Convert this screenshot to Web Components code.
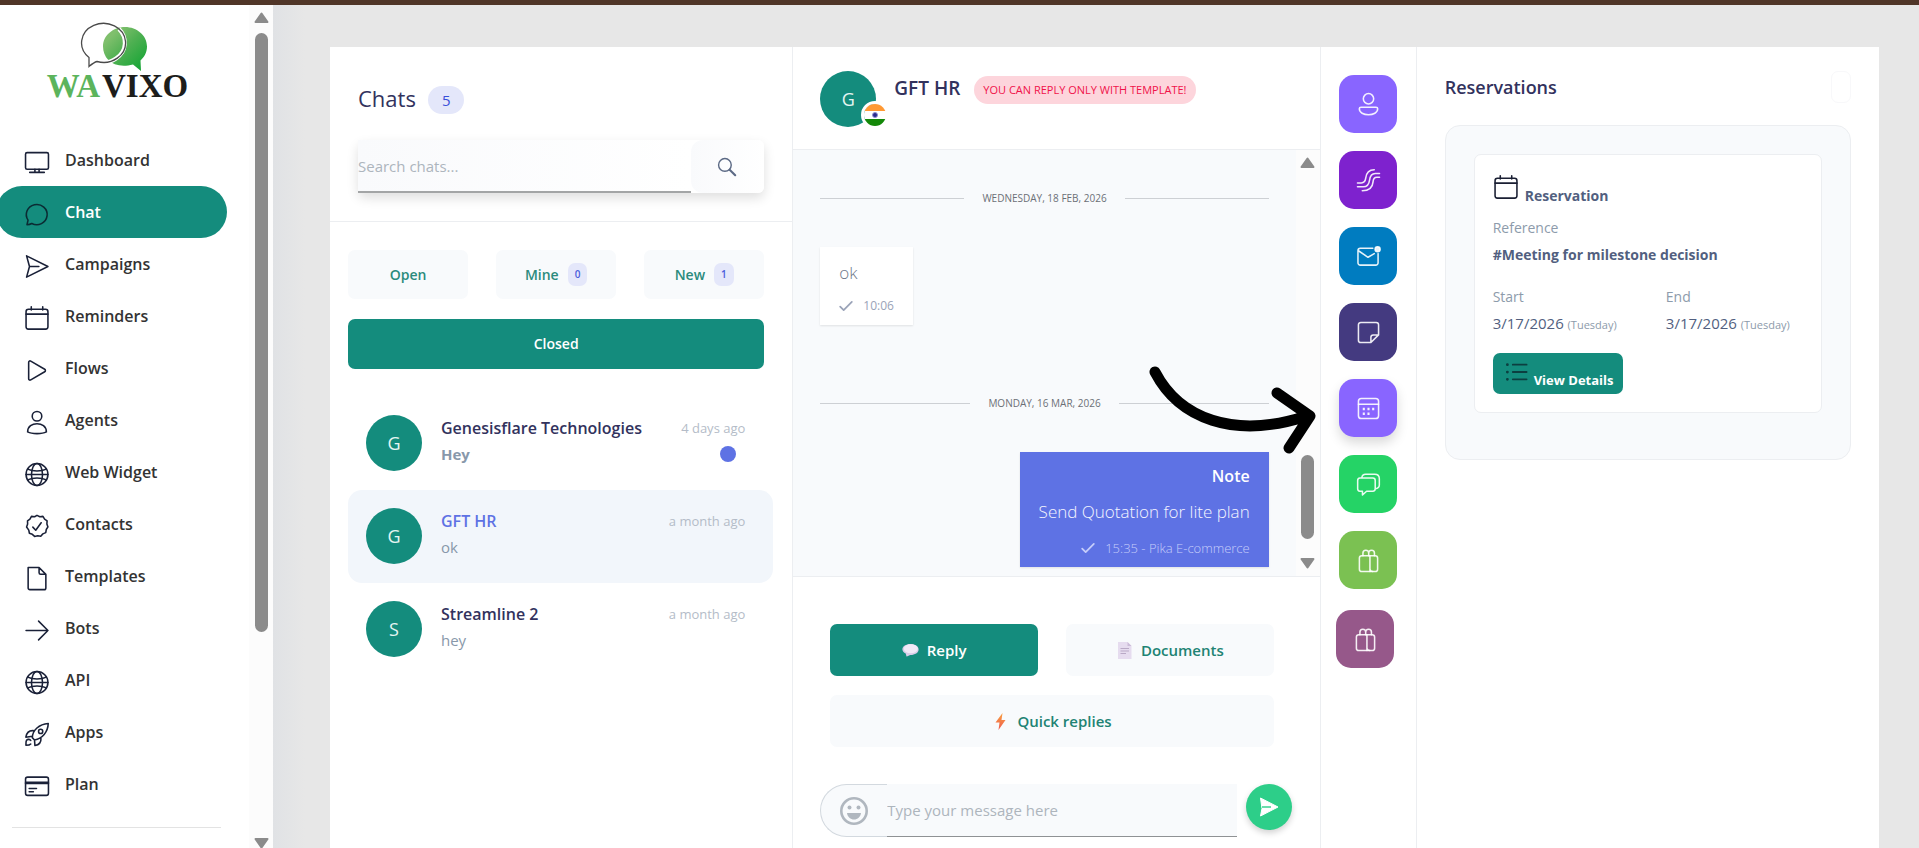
<!DOCTYPE html>
<html lang="en">
<head>
<meta charset="utf-8">
<meta name="viewport" content="width=device-width, initial-scale=1">
<title>Wavixo - Chat</title>
<style>
  body {
    margin: 0;
    min-height: 100vh;
    overflow: hidden;
    background: #e7e7e7;
    font-family: "Open Sans", "Noto Sans", sans-serif;
    color: #32325d;
    --teal: #148c7d;
    --indigo: #5e72e4;
    --soft: #f8fafc;
    --line: #eceef1;
    --muted: #8898aa;
  }
</style>
</head>
<body>
<wavixo-app></wavixo-app>

<script>
const ICONS = {
  monitor: '<rect x="1" y="2.5" width="22" height="16" rx="1.5"/><path d="M10 18.5v3M14 18.5v3M5 21.5h14"/>',
  chat: '<path d="M2.4 21.8l1-4.4A10 9.7 0 1 1 7 20.6c-1 .6-2.600 1.200-4.600 1.200z"/>',
  send: '<path d="M2 1.800l20.500 10.200L2 22.200l2.800-10.200zM4.800 12h9"/>',
  calendar: '<rect x="1.500" y="3.200" width="21" height="19" rx="2.200"/><path d="M1.500 7.800h21M6.500.800v3M17.500.800v3"/>',
  play: '<path d="M4 4.200v15.600c0 1.200 1 1.800 2 1.200l13.400-7.800c.9-.5.900-1.900 0-2.400L6 3c-1-.6-2 0-2 1.200z"/>',
  user: '<circle cx="12" cy="6" r="4.600"/><path d="M3 21c0-10.500 18-10.500 18 0-4 2.200-14 2.200-18 0z"/>',
  globe: '<circle cx="12" cy="12" r="10.500"/><ellipse cx="12" cy="12" rx="5.300" ry="10.500"/><path d="M3 6.800c5 2.400 13 2.400 18 0M3 17.200c5-2.400 13-2.400 18 0M1.500 12h21"/>',
  badge: '<path d="M12 1.300l2.700 1.300 3-.3 1.600 2.600 2.400 1.700-.2 3 1 2.800-1.600 2.500-.5 3-2.800 1.200-2 2.200-2.900-.4-3 .6-2.200-2-2.800-1-.6-3L2 12.500l1-2.800-.1-3 2.300-1.700L6.700 2.300l3 .3z"/><path d="M8 12.600l2.800 3L16 8.400"/>',
  page: '<path d="M3.500 1.500H14l6.500 6.500v13c0 1-.6 1.700-1.700 1.700H5.200c-1 0-1.700-.7-1.700-1.700zM14 1.500v5c0 1 .5 1.500 1.500 1.500h5"/>',
  arrow: '<path d="M1.500 12h21M13.500 3l9 9-9 9"/>',
  rocket: '<path d="M7.500 15c.2-7 6.500-13 15.300-13.600C22.500 9.500 17 16 9.600 17.200zM8.400 8.300C4 8 2 10.500 1.300 14.600l6.200-1M15.800 15.800c.3 3.800-1.800 6-5.800 6.800l-.4-5.400M2 17.500c1-1.300 3.400-1 4 .300M2 17.500c-.8 1.500-.6 3-.6 4.800 2 0 3.600 0 4.600-1.200"/><circle cx="15.500" cy="9" r="2"/>',
  card: '<rect x="1" y="3" width="22" height="17.500" rx="2"/><path d="M1 8h22M1 9h22M4.500 14h7M4.500 17h4"/>',
  search: '<circle cx="10" cy="10" r="8"/><path d="M16 16l7 7" stroke-width="2.600"/>',
  check: '<path d="M2 13l6 6L22 5" stroke-width="3"/>',
  list: '<path d="M2 4h.1M2 12h.1M2 20h.1" stroke-width="3"/><path d="M8 4h15M8 12h15M8 20h15" stroke-width="2"/>',
  person: '<circle cx="12" cy="6" r="5.400"/><path d="M4.200 14.800h15.600c1 0 1.800.7 1.800 1.700 0 4-4.600 6.300-9.600 6.300s-9.600-2.300-9.600-6.300c0-1 .8-1.700 1.800-1.700z"/>',
  waves: '<path d="M.5 14.500h4c3.500 0 4.200-2 4.600-5C9.700 4.500 11.500.800 18 .800M.5 18.600h6c4.500 0 6-2.500 6.600-7 .5-4.200 1.500-7 6-7h4.400M5.500 22.700c6.500 0 10.700-3 11.200-9 .3-3.500 1-5 4-5h2.800"/>',
  mail: '<path d="M16.500 3.500H3.500A2.500 2.500 0 0 0 1 6v12.500A2.500 2.500 0 0 0 3.500 21h16a2.500 2.500 0 0 0 2.500-2.500V9M1.500 6l10 6.800L18 9"/><circle cx="21.500" cy="4.500" r="2.600" fill="currentColor"/>',
  note: '<path d="M1.500 4A2.500 2.500 0 0 1 4 1.500h16A2.500 2.500 0 0 1 22.500 4v10.500l-8 8H4A2.500 2.500 0 0 1 1.500 20zM14.500 22V17c0-1.500 1-2.500 2.500-2.500h5"/>',
  dates: '<rect x="1.500" y="1.500" width="21" height="21" rx="3"/><path d="M1.500 7.500h21"/><path d="M6 12.500h2.200M10.900 12.500h2.200M15.800 12.500h2.200M6 17.500h2.200M10.900 17.500h2.200" stroke-width="2.600" stroke-linecap="butt"/>',
  chats: '<path d="M3 5.200h13.500a2.500 2.500 0 0 1 2.500 2.500v8.800a2.500 2.500 0 0 1-2.500 2.500H10l-4.300 4v-4H3A2.500 2.500 0 0 1 .7 16.500V7.700A2.500 2.500 0 0 1 3 5.200zM5 5c.3-2.300 1.500-3.700 4-3.700h9.500c3 0 4.800 1.800 4.800 4.700v6.500c0 2-1.300 3.500-4.300 4"/>',
  bag: '<rect x="2.500" y="7" width="19" height="16.500" rx="2.500"/><path d="M13.500 7v16.500M6.200 7V4.200a3 3 0 0 1 6 0V7M12.200 4.200a3 3 0 0 1 6 0V7M13.500 21c.5 1.800 1.500 2.500 3 2.500"/>'
};

class WxIcon extends HTMLElement {
  connectedCallback() {
    this.attachShadow({ mode: 'open' });
    this.shadowRoot.innerHTML = `
      <style>
        :host {
          display: block;
          flex: none;
          width: var(--size, 26px);
          height: var(--size, 26px);
        }
        svg {
          display: block;
          width: 100%;
          height: 100%;
          overflow: visible;
          fill: none;
          stroke: currentColor;
          stroke-width: var(--stroke, 1.5);
          stroke-linecap: round;
          stroke-linejoin: round;
        }
      </style>
      <svg viewBox="0 0 24 24" aria-hidden="true">${ICONS[this.getAttribute('name')]}</svg>
    `;
  }
}
customElements.define('wx-icon', WxIcon);

class WxAvatar extends HTMLElement {
  connectedCallback() {
    this.attachShadow({ mode: 'open' });
    this.shadowRoot.innerHTML = `
      <style>
        :host {
          display: flex;
          flex: none;
          align-items: center;
          justify-content: center;
          width: 56px;
          height: 56px;
          border-radius: 50%;
          background: var(--teal);
          color: #e4f5f2;
          font-size: 18px;
          line-height: 24px;
        }
      </style>
      <slot></slot>
    `;
  }
}
customElements.define('wx-avatar', WxAvatar);

// Always-visible scrollbar track; before/size/after are the thumb's share of the track
class WxScrollbar extends HTMLElement {
  connectedCallback() {
    this.attachShadow({ mode: 'open' });
    this.shadowRoot.innerHTML = `
      <style>
        :host {
          display: flex;
          flex-direction: column;
          align-items: center;
          box-sizing: border-box;
          width: 24px;
          padding: 7px 0;
          gap: 10px;
          background: #fcfcfc;
        }
        svg {
          flex: none;
          width: 15px;
          height: 11px;
          fill: #8b8b8b;
          stroke: #8b8b8b;
          stroke-width: 2;
          stroke-linejoin: round;
        }
        .track {
          flex: 1;
          display: flex;
          flex-direction: column;
        }
        .before { flex: ${this.getAttribute('before')}; }
        .thumb {
          flex: ${this.getAttribute('size')};
          width: 13px;
          border-radius: 7px;
          background: #8b8b8b;
        }
        .after { flex: ${this.getAttribute('after')}; }
      </style>
      <svg viewBox="0 0 15 11"><path d="M7.500 1.500L13.500 10h-12z"/></svg>
      <div class="track"><div class="before"></div><div class="thumb"></div><div class="after"></div></div>
      <svg viewBox="0 0 15 11"><path d="M7.500 9.500L13.500 1h-12z"/></svg>
    `;
  }
}
customElements.define('wx-scrollbar', WxScrollbar);

class WxLogo extends HTMLElement {
  connectedCallback() {
    this.attachShadow({ mode: 'open' });
    this.shadowRoot.innerHTML = `
      <style>
        :host {
          display: flex;
          flex-direction: column;
          align-items: center;
        }
        svg { display: block; }
        .name {
          display: flex;
          gap: 2px;
          font: bold 33px/30px "Liberation Serif", serif;
          color: #1d1d1b;
        }
        .wa { color: #5cb45c; }
      </style>
      <svg width="78" height="50" viewBox="0 0 78 50" aria-hidden="true">
        <defs>
          <linearGradient id="leaf" x1="0" y1="0" x2="1" y2="1">
            <stop offset="0.200" stop-color="#7fbf6c"/>
            <stop offset="0.500" stop-color="#4fb052"/>
            <stop offset="1" stop-color="#0aa32f"/>
          </linearGradient>
        </defs>
        <path fill="url(#leaf)" d="M46 6c12 0 22 8.500 22 19.500 0 5.500-2.500 10.500-6.500 14L62 50l-8-6.500C35 48.500 24 38 24 25.500 24 14.500 34 6 46 6z"/>
        <path fill="none" stroke="#fff" stroke-width="4" d="M40 8c8 8 8.500 22-3 29.500-5 3.500-12 5-19 3.700"/>
        <path fill="none" stroke="#4a4a4a" stroke-width="1.300" d="M10 45.500V36.500A22 19.500 0 1 1 18 40.500c-3 .8-5 2.500-8 5z"/>
      </svg>
      <div class="name"><span class="wa">WA</span><span>VIXO</span></div>
    `;
  }
}
customElements.define('wx-logo', WxLogo);

class AppSidebar extends HTMLElement {
  connectedCallback() {
    const items = [
      ['Dashboard', 'monitor'], ['Chat', 'chat'], ['Campaigns', 'send'],
      ['Reminders', 'calendar'], ['Flows', 'play'], ['Agents', 'user'],
      ['Web Widget', 'globe'], ['Contacts', 'badge'], ['Templates', 'page'],
      ['Bots', 'arrow'], ['API', 'globe'], ['Apps', 'rocket'], ['Plan', 'card']
    ];
    this.attachShadow({ mode: 'open' });
    this.shadowRoot.innerHTML = `
      <style>
        :host {
          display: flex;
          overflow: hidden;
          background: #fff;
        }
        .body {
          flex: 1;
          padding-top: 16px;
        }
        wx-logo { margin-right: 14px; }
        nav {
          margin: 33px 22px 17px -4px;
        }
        a {
          display: flex;
          align-items: center;
          gap: 15px;
          height: 52px;
          padding-left: 28px;
          border-radius: 26px;
          color: #333;
          font-size: 16px;
          font-weight: 600;
          line-height: 24px;
          text-decoration: none;
        }
        a.active {
          background: var(--teal);
          color: #fff;
        }
        wx-icon {
          --size: 25px;
          width: 26px;
          margin-top: 5px;
          color: #1a2138;
        }
        a.active wx-icon { color: #0b2b33; }
        hr {
          margin: 0 28px 0 12px;
          border: 0;
          border-top: 1px solid #e3e3e3;
        }
        wx-scrollbar { margin-bottom: -8px; }
      </style>
      <div class="body">
        <wx-logo></wx-logo>
        <nav>${items.map(([label, icon]) => `
          <a href="#"${label === 'Chat' ? ' class="active"' : ''}><wx-icon name="${icon}"></wx-icon>${label}</a>`).join('')}
        </nav>
        <hr>
      </div>
      <wx-scrollbar before="0" size="600" after="196"></wx-scrollbar>
    `;
  }
}
customElements.define('app-sidebar', AppSidebar);

class ChatItem extends HTMLElement {
  connectedCallback() {
    this.attachShadow({ mode: 'open' });
    this.shadowRoot.innerHTML = `
      <style>
        :host {
          display: flex;
          gap: 19px;
          padding: 18px 28px 19px 18px;
          border-radius: 14px;
        }
        :host([selected]) { background: #f2f6fb; }
        .text { flex: 1; }
        .row {
          display: flex;
          align-items: center;
          justify-content: space-between;
          height: 26px;
        }
        .name {
          font-size: 16px;
          font-weight: 600;
          color: #32325d;
        }
        :host([selected]) .name { color: var(--indigo); }
        .time {
          font-size: 13px;
          color: #b4bcc8;
        }
        .preview {
          font-size: 15px;
          color: var(--muted);
        }
        :host([unread]) .preview { font-weight: 700; }
        .dot {
          width: 16px;
          height: 16px;
          margin-right: 9px;
          border-radius: 50%;
          background: var(--indigo);
        }
      </style>
      <wx-avatar>${this.getAttribute('name')[0]}</wx-avatar>
      <div class="text">
        <div class="row"><span class="name">${this.getAttribute('name')}</span><span class="time">${this.getAttribute('time')}</span></div>
        <div class="row"><span class="preview"><slot></slot></span>${this.hasAttribute('unread') ? '<span class="dot"></span>' : ''}</div>
      </div>
    `;
  }
}
customElements.define('chat-item', ChatItem);

class ChatList extends HTMLElement {
  connectedCallback() {
    this.attachShadow({ mode: 'open' });
    this.shadowRoot.innerHTML = `
      <style>
        :host {
          display: block;
          min-width: 0;
        }
        header {
          padding: 33px 28px 28px;
          border-bottom: 1px solid var(--line);
        }
        .title {
          display: flex;
          align-items: center;
          gap: 12px;
          height: 36px;
          margin-bottom: 24px;
        }
        h1 {
          margin: 0;
          font-size: 22px;
          font-weight: 500;
          line-height: 30px;
        }
        .count {
          margin-top: 4px;
          padding: 0 14px;
          border-radius: 14px;
          background: #e4e7fa;
          color: #3a50d9;
          font-size: 15px;
          line-height: 28px;
        }
        .search {
          display: flex;
          height: 53px;
          border-radius: 6px;
          box-shadow: 0 5px 12px rgba(0, 0, 0, 0.130);
        }
        input {
          flex: 1;
          min-width: 0;
          padding: 0;
          border: 0;
          border-bottom: 2px solid #a3a5a6;
          background: linear-gradient(90deg, #f9fafc, #fff);
          font: 15px "Open Sans", sans-serif;
        }
        input::placeholder { color: #adb5bd; }
        .search button {
          display: flex;
          align-items: center;
          justify-content: center;
          width: 73px;
          padding: 0 3px 0 0;
          border: 0;
          border-radius: 12px 6px 6px 12px;
          background: linear-gradient(90deg, #f9fafc, #fff);
          color: #5c6a85;
          --size: 19px;
          --stroke: 1.800;
        }
        .tabs {
          display: grid;
          grid-template-columns: repeat(3, 1fr);
          gap: 20px 28px;
          padding: 28px 28px 28px 18px;
        }
        .tabs button {
          display: flex;
          align-items: center;
          justify-content: center;
          gap: 9px;
          height: 49px;
          padding: 0;
          border: 0;
          border-radius: 7px;
          background: var(--soft);
          color: #2b8b7d;
          font: 600 14px/20px "Open Sans", sans-serif;
        }
        .tabs .closed {
          grid-column: 1 / -1;
          height: 50px;
          background: var(--teal);
          color: #fff;
        }
        .tabs span {
          padding: 0 7px;
          border-radius: 7px;
          background: #e4e7fa;
          color: #4a5ddc;
          font-size: 10px;
          line-height: 23px;
        }
        .items { margin: 0 19px 0 18px; }
      </style>
      <header>
        <div class="title"><h1>Chats</h1><span class="count">5</span></div>
        <div class="search">
          <input type="text" placeholder="Search chats..." aria-label="Search chats">
          <button aria-label="Search"><wx-icon name="search"></wx-icon></button>
        </div>
      </header>
      <div class="tabs">
        <button>Open</button>
        <button>Mine <span>0</span></button>
        <button>New <span>1</span></button>
        <button class="closed">Closed</button>
      </div>
      <div class="items">
        <chat-item name="Genesisflare Technologies" time="4 days ago" unread>Hey</chat-item>
        <chat-item name="GFT HR" time="a month ago" selected>ok</chat-item>
        <chat-item name="Streamline 2" time="a month ago">hey</chat-item>
      </div>
    `;
  }
}
customElements.define('chat-list', ChatList);

class DateDivider extends HTMLElement {
  connectedCallback() {
    this.attachShadow({ mode: 'open' });
    this.shadowRoot.innerHTML = `
      <style>
        :host {
          display: flex;
          align-items: center;
          gap: 18px;
          height: 24px;
          margin: 36px 0 37px;
          color: #6c7077;
          font-size: 10px;
        }
        :host::before,
        :host::after {
          content: "";
          flex: 1;
          border-top: 1px solid #cdd0d4;
        }
      </style>
      <slot></slot>
    `;
  }
}
customElements.define('date-divider', DateDivider);

class MessageBubble extends HTMLElement {
  connectedCallback() {
    const heading = this.getAttribute('heading');
    this.attachShadow({ mode: 'open' });
    this.shadowRoot.innerHTML = `
      <style>
        :host {
          display: block;
          box-sizing: border-box;
          align-self: flex-start;
          margin-bottom: 30px;
          padding: 12px 19px 5px;
          background: #fff;
          box-shadow: 0 1px 2px rgba(0, 0, 0, 0.100);
          color: #6d7789;
        }
        :host([outgoing]) {
          align-self: flex-end;
          margin-bottom: 9px;
          background: var(--indigo);
          color: #f4f5ff;
          text-align: right;
        }
        .heading {
          margin-bottom: 10px;
          color: #fff;
          font-size: 16px;
          font-weight: 600;
          line-height: 24px;
        }
        .text {
          margin-bottom: 4px;
          font-size: 17px;
          font-weight: 300;
          line-height: 28px;
        }
        .meta {
          display: flex;
          align-items: center;
          justify-content: flex-end;
          gap: 10px;
          height: 29px;
          color: #9aa3b8;
          font-size: 12px;
          --size: 14px;
        }
        :host([outgoing]) .text { margin-bottom: 7px; }
        :host([outgoing]) .meta {
          color: #c6cdfa;
          font-size: 13px;
          font-weight: 300;
        }
      </style>
      ${heading ? `<div class="heading">${heading}</div>` : ''}
      <div class="text"><slot></slot></div>
      <div class="meta"><wx-icon name="check"></wx-icon>${this.getAttribute('meta')}</div>
    `;
  }
}
customElements.define('message-bubble', MessageBubble);

class MessageComposer extends HTMLElement {
  connectedCallback() {
    this.attachShadow({ mode: 'open' });
    this.shadowRoot.innerHTML = `
      <style>
        :host {
          display: block;
          padding: 47px 28px 10px 27px;
        }
        .actions {
          display: grid;
          grid-template-columns: 1fr 1fr;
          gap: 19px 28px;
          margin: 0 18px 37px 10px;
        }
        .actions button {
          display: flex;
          align-items: center;
          justify-content: center;
          gap: 8px;
          height: 52px;
          padding: 0;
          border: 0;
          border-radius: 7px;
          background: var(--soft);
          color: #218373;
          font: 600 15px/24px "Open Sans", sans-serif;
        }
        .actions .reply {
          background: var(--teal);
          color: #fff;
        }
        .actions .quick { grid-column: 1 / -1; }
        .row {
          display: flex;
          gap: 9px;
        }
        .field {
          flex: 1;
          display: flex;
          height: 53px;
        }
        .emoji {
          display: flex;
          align-items: center;
          box-sizing: border-box;
          width: 67px;
          padding: 0 0 0 18px;
          border: 1px solid #d3d9df;
          border-right: 0;
          border-radius: 27px 0 0 27px;
          background: var(--soft);
        }
        input {
          flex: 1;
          min-width: 0;
          padding: 0;
          border: 0;
          border-bottom: 1px solid #8f9294;
          background: var(--soft);
          font: 15px "Open Sans", sans-serif;
        }
        input::placeholder { color: #adb5bd; }
        .send {
          display: flex;
          align-items: center;
          justify-content: center;
          width: 46px;
          height: 46px;
          padding: 0;
          border: 0;
          border-radius: 50%;
          background: #2dce89;
          box-shadow: 0 3px 6px rgba(0, 0, 0, 0.180);
        }
      </style>
      <div class="actions">
        <button class="reply">
          <svg width="17" height="17" viewBox="0 0 17 17" aria-hidden="true"><path fill="#d9cce8" d="M4.500 14.500l-.8-3C1.600 10.500.4 9 .4 7.500.400 4.300 4 2 8.500 2s8.100 2.300 8.100 5.500S13 13 8.500 13c-1 0-3 1.600-4 1.500z"/><ellipse cx="8.800" cy="6.800" rx="7" ry="4.500" fill="#f1eaf7"/></svg>
          Reply
        </button>
        <button>
          <svg width="17" height="17" viewBox="0 0 17 17" aria-hidden="true"><path fill="#e6dcef" d="M2 0h9.500L15.500 4v13H2z"/><path fill="#cbbbd8" d="M11.500 0l4 4h-4z"/><path stroke="#b9a9c6" d="M4.500 6.500h8.500M4.500 9h8.500M4.500 11.500h5.500"/></svg>
          Documents
        </button>
        <button class="quick">
          <svg width="17" height="17" viewBox="0 0 17 17" aria-hidden="true"><defs><linearGradient id="bolt" x2="0" y2="1"><stop stop-color="#f9a03f"/><stop offset="1" stop-color="#ee5a50"/></linearGradient></defs><path fill="url(#bolt)" d="M10.500 0L3.500 9.500h4L6.500 17l7-10h-4z"/></svg>
          Quick replies
        </button>
      </div>
      <div class="row">
        <div class="field">
          <button class="emoji" aria-label="Insert emoji">
            <svg width="30" height="30" viewBox="0 0 30 30" fill="#b0b7bf" aria-hidden="true"><circle cx="15" cy="15" r="12.700" fill="none" stroke="#b0b7bf" stroke-width="2.600"/><circle cx="10.500" cy="11.500" r="2"/><circle cx="19.500" cy="11.500" r="2"/><path d="M8 17h14c-.5 4-3.500 6.500-7 6.500S8.500 21 8 17z"/></svg>
          </button>
          <input type="text" placeholder="Type your message here" aria-label="Message">
        </div>
        <button class="send" aria-label="Send">
          <svg width="20" height="20" viewBox="0 0 20 20" aria-hidden="true"><path fill="#fff" stroke="#fff" stroke-linejoin="round" d="M1.500 1l17.500 9-17.500 9 1.500-7.500z"/><path stroke="#2dce89" stroke-width="1.400" d="M3 10h9"/></svg>
        </button>
      </div>
    `;
  }
}
customElements.define('message-composer', MessageComposer);

class ConversationView extends HTMLElement {
  connectedCallback() {
    this.attachShadow({ mode: 'open' });
    this.shadowRoot.innerHTML = `
      <style>
        :host {
          display: block;
          min-width: 0;
          border: solid var(--line);
          border-width: 0 1px;
        }
        header {
          display: flex;
          gap: 18px;
          padding: 24px 27px 22px;
          border-bottom: 1px solid var(--line);
        }
        .who {
          position: relative;
        }
        .flag {
          position: absolute;
          right: -13px;
          bottom: -2px;
          border: 3px solid #fff;
          border-radius: 50%;
        }
        .flag svg { display: block; }
        h2 {
          margin: 0;
          font-size: 19px;
          font-weight: 600;
          line-height: 34px;
        }
        .notice {
          align-self: flex-start;
          margin: 5px 0 0 -4px;
          padding: 0 9px;
          border-radius: 14px;
          background: #fdd5dc;
          color: #f0134a;
          font-size: 11px;
          line-height: 28px;
        }
        .messages {
          display: flex;
          background: var(--soft);
          border-bottom: 1px solid var(--line);
        }
        .thread {
          flex: 1;
          display: flex;
          flex-direction: column;
          padding: 0 27px;
        }
      </style>
      <header>
        <div class="who">
          <wx-avatar>G</wx-avatar>
          <span class="flag"><svg width="22" height="22" viewBox="0 0 22 22" role="img" aria-label="India"><clipPath id="round"><circle cx="11" cy="11" r="11"/></clipPath><g clip-path="url(#round)"><path fill="#fff" d="M0 0h22v22H0z"/><path fill="#ff9933" d="M0 0h22v7H0z"/><path fill="#138808" d="M0 15h22v7H0z"/></g><circle cx="11" cy="11" r="2.500" fill="#2a2a8c" stroke="#8f8fd0"/></svg></span>
        </div>
        <h2>GFT HR</h2>
        <span class="notice">YOU CAN REPLY ONLY WITH TEMPLATE!</span>
      </header>
      <div class="messages">
        <div class="thread">
          <date-divider>WEDNESDAY, 18 FEB, 2026</date-divider>
          <message-bubble meta="10:06">ok</message-bubble>
          <date-divider>MONDAY, 16 MAR, 2026</date-divider>
          <message-bubble outgoing heading="Note" meta="15:35 - Pika E-commerce">Send Quotation for lite plan</message-bubble>
        </div>
        <wx-scrollbar before="278" size="84" after="9"></wx-scrollbar>
      </div>
      <message-composer></message-composer>
    `;
  }
}
customElements.define('conversation-view', ConversationView);

class ToolRail extends HTMLElement {
  connectedCallback() {
    const tools = [
      ['Contact', 'person', '#8965ff'], ['Journeys', 'waves', '#7e22ce'],
      ['Email', 'mail', '#007cc0'], ['Notes', 'note', '#443a80'],
      ['Reservations', 'dates', '#8965ff', 'current'], ['Chats', 'chats', '#25d366'],
      ['Shopify', 'bag', '#7bc152'], ['WooCommerce', 'bag', '#96588a']
    ];
    this.attachShadow({ mode: 'open' });
    this.shadowRoot.innerHTML = `
      <style>
        :host {
          display: flex;
          flex-direction: column;
          align-items: center;
          gap: 18px;
          padding-top: 28px;
          border-right: 1px solid var(--line);
        }
        button {
          display: flex;
          align-items: center;
          justify-content: center;
          width: 58px;
          height: 58px;
          padding: 0;
          border: 0;
          border-radius: 15px;
          color: rgba(255, 255, 255, 0.900);
          --size: 23px;
          --stroke: 1.600;
        }
        button.current { box-shadow: 0 6px 12px rgba(0, 0, 0, 0.150); }
        button:last-child { margin: 3px 6px 0 0; }
      </style>
      ${tools.map(([label, icon, color, cls = '']) => `
        <button class="${cls}" style="background: ${color}" aria-label="${label}"><wx-icon name="${icon}"></wx-icon></button>`).join('')}
    `;
  }
}
customElements.define('tool-rail', ToolRail);

class ReservationPanel extends HTMLElement {
  connectedCallback() {
    this.attachShadow({ mode: 'open' });
    this.shadowRoot.innerHTML = `
      <style>
        :host {
          display: block;
          min-width: 0;
          padding: 24px 28px;
        }
        header {
          display: flex;
          align-items: center;
          justify-content: space-between;
          margin-bottom: 22px;
        }
        h2 {
          margin: 0;
          font-size: 18px;
          font-weight: 600;
          line-height: 32px;
        }
        header button {
          width: 20px;
          height: 32px;
          padding: 0;
          border: 1px solid #f8f8fa;
          border-radius: 7px;
          background: #fff;
        }
        .card {
          padding: 28px 28px 46px;
          border: 1px solid var(--line);
          border-radius: 15px;
          background: var(--soft);
        }
        .details {
          padding: 18px;
          border: 1px solid var(--line);
          border-radius: 7px;
          background: #fff;
          color: #525f7f;
        }
        .kind {
          display: flex;
          gap: 6px;
          margin-bottom: 8px;
          font-size: 14px;
          font-weight: 700;
          line-height: 22px;
        }
        .kind wx-icon {
          width: 26px;
          margin: 2px 0 0;
          color: #1a1f33;
          --size: 25px;
        }
        .kind span { padding-top: 12px; }
        .label {
          color: #8d9bab;
          font-size: 14px;
          line-height: 26px;
        }
        .reference {
          margin-bottom: 15px;
          font-size: 14px;
          font-weight: 700;
          line-height: 28px;
        }
        .dates {
          display: grid;
          grid-template-columns: 1fr 1fr;
          gap: 36px;
          margin-bottom: 15px;
          font-size: 15px;
          line-height: 27px;
        }
        small {
          color: #8d9bab;
          font-size: 11px;
        }
        .view {
          display: flex;
          gap: 6px;
          height: 41px;
          padding: 0 10px 0 12px;
          border: 0;
          border-radius: 7px;
          background: var(--teal);
          color: #fff;
          font: 700 13px/18px "Open Sans", sans-serif;
        }
        .view wx-icon {
          width: 23px;
          margin-top: 8px;
          color: #0c3f40;
          --size: 22px;
        }
        .view span { margin-top: 18px; }
      </style>
      <header><h2>Reservations</h2><button aria-label="Add reservation"></button></header>
      <div class="card">
        <div class="details">
          <div class="kind"><wx-icon name="calendar"></wx-icon><span>Reservation</span></div>
          <div class="label">Reference</div>
          <div class="reference">#Meeting for milestone decision</div>
          <div class="dates">
            <div><div class="label">Start</div>3/17/2026 <small>(Tuesday)</small></div>
            <div><div class="label">End</div>3/17/2026 <small>(Tuesday)</small></div>
          </div>
          <button class="view"><wx-icon name="list"></wx-icon><span>View Details</span></button>
        </div>
      </div>
    `;
  }
}
customElements.define('reservation-panel', ReservationPanel);

class WavixoApp extends HTMLElement {
  connectedCallback() {
    this.attachShadow({ mode: 'open' });
    this.shadowRoot.innerHTML = `
      <style>
        :host {
          display: grid;
          grid-template-columns: 273px 1fr;
          box-sizing: border-box;
          height: 100vh;
          overflow: hidden;
          border-top: 5px solid #503628;
        }
        main {
          min-width: 0;
          padding: 42px 40px 0 57px;
          background: linear-gradient(90deg, #e0e2e5, #e7e7e7 32px);
        }
        .panel {
          position: relative;
          display: grid;
          grid-template-columns: minmax(0, 77fr) minmax(0, 88fr) 96px minmax(0, 77fr);
          height: 100%;
          background: #fff;
        }
        /* hand-drawn pointer towards the reservations tool */
        .pointer {
          position: absolute;
          left: calc((100% - 96px) * 0.682 - 176px);
          top: 312px;
        }
      </style>
      <app-sidebar></app-sidebar>
      <main>
        <div class="panel">
          <chat-list></chat-list>
          <conversation-view></conversation-view>
          <tool-rail></tool-rail>
          <reservation-panel></reservation-panel>
          <svg class="pointer" width="176" height="102" viewBox="0 0 176 102" fill="none" stroke="#000" stroke-width="11" stroke-linecap="round" stroke-linejoin="round" aria-hidden="true">
            <path d="M10 13C34 59 88 81 162 57M132 34L165 57L144 89"/>
          </svg>
        </div>
      </main>
    `;
  }
}
customElements.define('wavixo-app', WavixoApp);
</script>
</body>
</html>
